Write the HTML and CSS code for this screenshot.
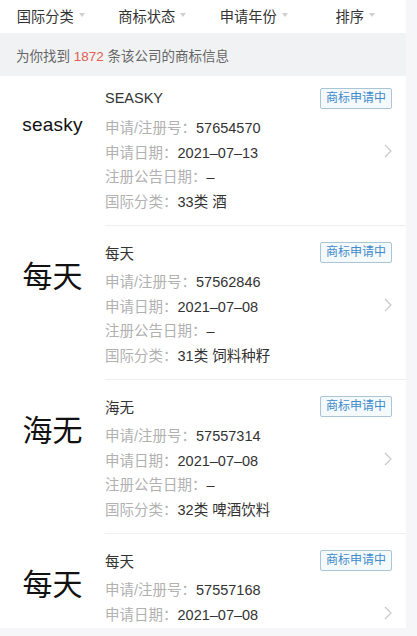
FILE: index.html
```html
<!DOCTYPE html>
<html lang="zh-CN">
<head>
<meta charset="utf-8">
<title>商标信息</title>
<link rel="stylesheet" href="styles.css">
</head>
<body>
<div class="page">
  <div class="filters">
    <div class="filter"><span>国际分类</span><i class="tri"></i></div>
    <div class="filter"><span>商标状态</span><i class="tri"></i></div>
    <div class="filter"><span>申请年份</span><i class="tri"></i></div>
    <div class="filter"><span>排序</span><i class="tri"></i></div>
  </div>
  <div class="info">为你找到 <span class="count">1872</span> 条该公司的商标信息</div>
  <div class="list">
    <div class="item first">
      <div class="logo"><span class="logo-en">seasky</span></div>
      <div class="body">
        <div class="title">SEASKY</div>
        <span class="badge">商标申请中</span>
        <div class="rows">
          <div class="row"><span class="label">申请/注册号：</span><span class="value">57654570</span></div>
          <div class="row"><span class="label">申请日期：</span><span class="value">2021–07–13</span></div>
          <div class="row"><span class="label">注册公告日期：</span><span class="value">–</span></div>
          <div class="row"><span class="label">国际分类：</span><span class="value">33类 酒</span></div>
        </div>
        <svg class="chev" viewBox="0 0 8 14" width="8" height="14"><polyline points="1,1 7,7 1,13" fill="none" stroke="#c9c9c9" stroke-width="1.2"/></svg>
      </div>
    </div>
    <div class="item">
      <div class="logo"><span class="logo-cn">每天</span></div>
      <div class="body">
        <div class="title">每天</div>
        <span class="badge">商标申请中</span>
        <div class="rows">
          <div class="row"><span class="label">申请/注册号：</span><span class="value">57562846</span></div>
          <div class="row"><span class="label">申请日期：</span><span class="value">2021–07–08</span></div>
          <div class="row"><span class="label">注册公告日期：</span><span class="value">–</span></div>
          <div class="row"><span class="label">国际分类：</span><span class="value">31类 饲料种籽</span></div>
        </div>
        <svg class="chev" viewBox="0 0 8 14" width="8" height="14"><polyline points="1,1 7,7 1,13" fill="none" stroke="#c9c9c9" stroke-width="1.2"/></svg>
      </div>
    </div>
    <div class="item">
      <div class="logo"><span class="logo-cn">海无</span></div>
      <div class="body">
        <div class="title">海无</div>
        <span class="badge">商标申请中</span>
        <div class="rows">
          <div class="row"><span class="label">申请/注册号：</span><span class="value">57557314</span></div>
          <div class="row"><span class="label">申请日期：</span><span class="value">2021–07–08</span></div>
          <div class="row"><span class="label">注册公告日期：</span><span class="value">–</span></div>
          <div class="row"><span class="label">国际分类：</span><span class="value">32类 啤酒饮料</span></div>
        </div>
        <svg class="chev" viewBox="0 0 8 14" width="8" height="14"><polyline points="1,1 7,7 1,13" fill="none" stroke="#c9c9c9" stroke-width="1.2"/></svg>
      </div>
    </div>
    <div class="item partial">
      <div class="logo"><span class="logo-cn">每天</span></div>
      <div class="body">
        <div class="title">每天</div>
        <span class="badge">商标申请中</span>
        <div class="rows">
          <div class="row"><span class="label">申请/注册号：</span><span class="value">57557168</span></div>
          <div class="row"><span class="label">申请日期：</span><span class="value">2021–07–08</span></div>
        </div>
        <svg class="chev" viewBox="0 0 8 14" width="8" height="14"><polyline points="1,1 7,7 1,13" fill="none" stroke="#c9c9c9" stroke-width="1.2"/></svg>
      </div>
    </div>
  </div>
</div>
</body>
</html>
```

FILE: styles.css
```css
* { box-sizing: border-box; }
html, body { margin: 0; padding: 0; }
body {
  background: #f6f6f8;
  font-family: "Liberation Sans", "Noto Sans CJK SC", sans-serif;
  color: #333;
}
.page {
  width: 406px;
  background: #fff;
}
.filters {
  display: flex;
  height: 33px;
}
.filter {
  flex: 1;
  display: flex;
  align-items: center;
  justify-content: center;
  gap: 5px;
  padding-bottom: 3px;
  font-size: 14.25px;
  color: #333;
}
.tri {
  width: 0;
  height: 0;
  border-left: 3.5px solid transparent;
  border-right: 3.5px solid transparent;
  border-top: 4px solid #cfcfcf;
}
.info {
  background: #f1f2f4;
  padding: 14px 16px 9px;
  font-size: 13.5px;
  line-height: 20px;
  color: #666;
}
.count { color: #e35d52; }
.list {
  height: 552px;
  overflow: hidden;
}
.item {
  display: flex;
}
.logo {
  width: 105px;
  flex: none;
  display: flex;
  justify-content: center;
  padding-top: 31px;
}
.item.first .logo { padding-top: 29px; }
.logo-en, .logo-cn {
  line-height: 40px;
  color: #111;
  white-space: nowrap;
}
.logo-en { font-size: 19px; letter-spacing: 0.2px; }
.logo-cn { font-size: 30px; }
.body {
  flex: 1;
  display: grid;
  grid-template-columns: 1fr auto;
  grid-template-rows: auto auto;
  padding: 15px 14px 11px 0;
  border-bottom: 1px solid #efefef;
}
.item.first .body { padding-top: 11px; }
.item.partial .body {
  min-height: 154px;
  grid-template-rows: auto 1fr;
}
.title {
  grid-column: 1;
  grid-row: 1;
  height: 22px;
  display: flex;
  align-items: center;
  font-size: 14.5px;
  color: #333;
}
.badge {
  grid-column: 2;
  grid-row: 1;
  align-self: center;
  justify-self: end;
  height: 21px;
  padding: 0 5px;
  border: 1px solid #aac5d6;
  border-radius: 2px;
  background: #f4f9fc;
  color: #3f8bcb;
  font-size: 12px;
  line-height: 19px;
  white-space: nowrap;
}
.rows {
  grid-column: 1;
  grid-row: 2;
  margin-top: 7px;
}
.row {
  font-size: 14.5px;
  line-height: 24.5px;
  white-space: nowrap;
}
.label { color: #b1b1b1; }
.value { color: #333; }
.chev {
  grid-column: 2;
  grid-row: 1 / 3;
  align-self: center;
  justify-self: end;
}
```
